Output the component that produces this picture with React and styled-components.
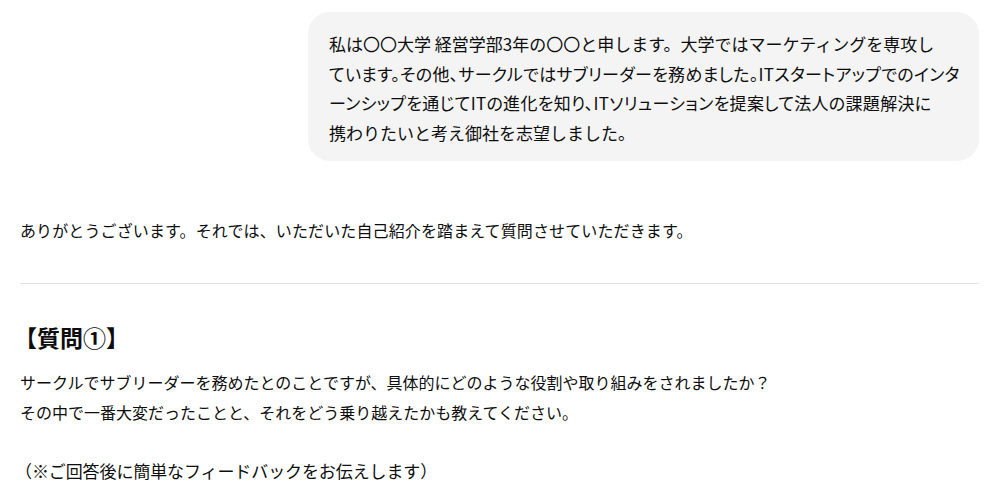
import React from "react";
import styled, { createGlobalStyle } from "styled-components";

const GlobalStyle = createGlobalStyle`
  html, body {
    margin: 0;
    padding: 0;
    background: #ffffff;
  }
  body {
    font-family: "Noto Sans CJK JP", "Noto Sans", sans-serif;
    color: #0d0d0d;
  }
`;

const Thread = styled.main`
  padding: 12px 18px 20px 20px;
  display: flex;
  flex-direction: column;
`;

const UserRow = styled.div`
  display: flex;
  justify-content: flex-end;
`;

const Bubble = styled.div`
  width: 671px;
  box-sizing: border-box;
  background: #f4f4f4;
  border-radius: 22px;
  padding: 17px 10px 13px 21px;
  font-size: 17px;
  line-height: 29.7px;
`;

/* some lines in the original are set with proportional kana */
const Line = styled.span`
  display: block;
  white-space: nowrap;
  font-feature-settings: ${(p) => (p.$palt ? '"palt"' : "normal")};
  letter-spacing: ${(p) => (p.$palt ? "0.3px" : "0")};
`;

const Reply = styled.section`
  margin-top: 55px;
  font-size: 16px;
`;

const Paragraph = styled.p`
  margin: 0;
  line-height: 29px;
  letter-spacing: 0.12px;
`;

const Divider = styled.hr`
  border: none;
  border-top: 1px solid #e3e3e3;
  margin: 38px 0 37px;
`;

const Heading = styled.h3`
  margin: 0 0 14px -6px;
  font-size: 23px;
  font-weight: 700;
  line-height: 32px;
`;

const Question = styled.p`
  margin: 0;
  line-height: 30.5px;
`;

const Note = styled.p`
  margin: 28px 0 0 -5px;
  font-size: 17px;
  line-height: 30px;
  letter-spacing: -0.1px;
`;

export default function App() {
  return (
    <>
      <GlobalStyle />
      <Thread>
        <UserRow>
          <Bubble>
            <Line>私は〇〇大学 経営学部3年の〇〇と申します。大学ではマーケティングを専攻し</Line>
            <Line $palt>ています。その他、サークルではサブリーダーを務めました。ITスタートアップでのインタ</Line>
            <Line $palt>ーンシップを通じてITの進化を知り、ITソリューションを提案して法人の課題解決に</Line>
            <Line>携わりたいと考え御社を志望しました。</Line>
          </Bubble>
        </UserRow>
        <Reply>
          <Paragraph>
            ありがとうございます。それでは、いただいた自己紹介を踏まえて質問させていただきます。
          </Paragraph>
          <Divider />
          <Heading>【質問①】</Heading>
          <Question>
            サークルでサブリーダーを務めたとのことですが、具体的にどのような役割や取り組みをされましたか？
            <br />
            その中で一番大変だったことと、それをどう乗り越えたかも教えてください。
          </Question>
          <Note>（※ご回答後に簡単なフィードバックをお伝えします）</Note>
        </Reply>
      </Thread>
    </>
  );
}
